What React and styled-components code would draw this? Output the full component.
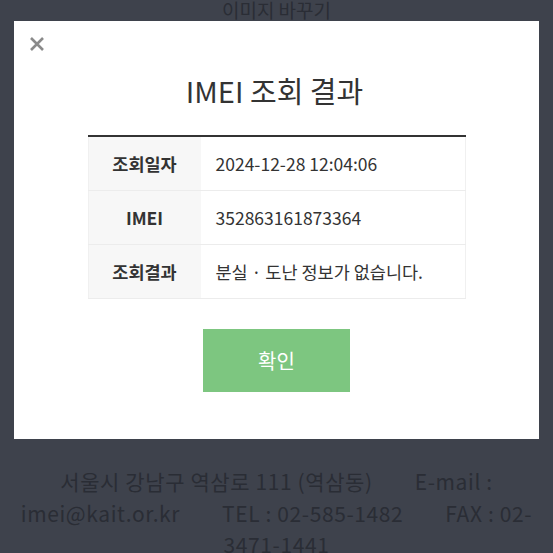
import React from 'react';
import styled, {createGlobalStyle} from 'styled-components';

const GlobalStyle = createGlobalStyle`
html, body {
margin: 0;
padding: 0;
background: #3e424c;
font-family: "Noto Sans CJK KR", "Noto Sans", sans-serif;
}
`;

const rows = [
    {label: '조회일자', value: '2024-12-28 12:04:06'},
    {label: 'IMEI', value: '352863161873364'},
    {label: '조회결과', value: '분실 · 도난 정보가 없습니다.'},
];

const App = () => {
    return (
        <Page>
            <GlobalStyle/>
            <TopLabel>{'이미지 바꾸기'}</TopLabel>
            <Spacer/>
            <Footer>
                {'서울시 강남구 역삼로 111 (역삼동)'}<Gap/>{'E-mail : imei@kait.or.kr'}<Gap/>{'TEL : 02-585-1482'}<Gap/>{'FAX : 02-3471-1441'}
            </Footer>

            <Modal>
                <Close aria-label={'닫기'}>
                    <svg width="16" height="16" viewBox="0 0 16 16">
                        <path d="M2 2 L14 14 M14 2 L2 14" stroke="#8a8a8a" strokeWidth="2.6" fill="none"/>
                    </svg>
                </Close>
                <Title>{'IMEI 조회 결과'}</Title>
                <Table>
                    {rows.map(r => (
                        <Row key={r.label}>
                            <Head>{r.label}</Head>
                            <Cell>{r.value}</Cell>
                        </Row>
                    ))}
                </Table>
                <Confirm>{'확인'}</Confirm>
            </Modal>
        </Page>
    );
};

export default App;


const Page = styled.div`
position: relative;
width: 553px;
height: 553px;
overflow: hidden;
color: #2a2d35;
`;

const TopLabel = styled.div`
text-align: center;
font-size: 19px;
line-height: 24px;
margin-top: -2px;
`;

const Spacer = styled.div`
height: 444px;
`;

const Footer = styled.div`
padding: 0 16px;
text-align: center;
font-size: 21px;
line-height: 31.5px;
letter-spacing: 0.6px;
`;

const Gap = styled.span`
display: inline-block;
width: 42px;
`;

const Modal = styled.div`
position: absolute;
top: 21px;
left: 14px;
width: 525px;
height: 418px;
box-sizing: border-box;
background: #fff;
padding-top: 49px;
display: flex;
flex-direction: column;
align-items: center;
color: #333;
`;

const Close = styled.button`
position: absolute;
top: 15px;
left: 15px;
width: 16px;
height: 16px;
padding: 0;
border: 0;
background: none;
display: flex;
`;

const Title = styled.h2`
margin: 0 4px 0 0;
font-size: 29px;
line-height: 40px;
font-weight: 400;
color: #333;
`;

const Table = styled.div`
margin-top: 25px;
width: 378px;
border-top: 2px solid #333;
display: flex;
flex-direction: column;
`;

const Row = styled.div`
display: grid;
grid-template-columns: 113px 1fr;
height: 54px;
border-bottom: 1px solid #ececec;
box-sizing: border-box;
`;

const Head = styled.div`
background: #f7f7f7;
border-left: 1px solid #f0f0f0;
display: flex;
align-items: center;
justify-content: center;
font-size: 17.5px;
font-weight: 700;
color: #333;
`;

const Cell = styled.div`
display: flex;
align-items: center;
padding-left: 15px;
border-right: 1px solid #f0f0f0;
font-size: 17.5px;
color: #333;
`;

const Confirm = styled.button`
margin-top: 30px;
width: 147px;
height: 63px;
border: 0;
background: #7dc680;
color: #fff;
font-family: "Noto Sans CJK KR", "Noto Sans", sans-serif;
font-size: 20px;
cursor: pointer;
`;
